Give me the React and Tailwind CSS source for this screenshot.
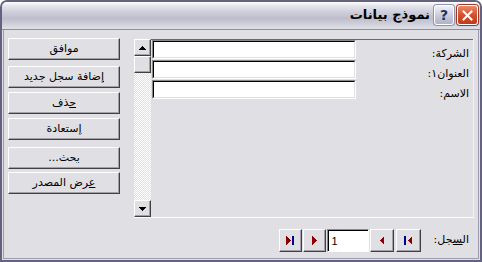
const raised = 'border border-t-white border-l-white border-r-[#404040] border-b-[#404040] bg-[#e0dfe3] shadow-[inset_-1px_-1px_0_#a2a1a8]';

function Btn({ className = '', children }) {
  return (
    <div className={`flex items-center justify-center ${raised} ${className}`}>
      {children}
    </div>
  );
}

function Field() {
  return (
    <div className="h-[19px] border-t border-l border-t-[#8a8a8a] border-l-[#8a8a8a] border-b border-r border-b-white border-r-white">
      <div className="h-full border-t border-l border-t-black border-l-black border-b border-r border-b-[#e0dfe3] border-r-[#e0dfe3] bg-white" />
    </div>
  );
}

function NavIcon({ kind }) {
  const red = '#8b0000';
  const navy = '#00008b';
  return (
    <svg width="10" height="9" viewBox="0 0 10 9" shapeRendering="crispEdges">
      {kind === 'first' && (<><rect x="1" y="0" width="2" height="9" fill={navy} /><polygon points="9,0 4.5,4.5 9,9" fill={red} /></>)}
      {kind === 'prev' && <polygon points="7,0 2.5,4.5 7,9" fill={red} />}
      {kind === 'next' && <polygon points="3,0 7.5,4.5 3,9" fill={red} />}
      {kind === 'last' && (<><polygon points="1,0 5.5,4.5 1,9" fill={red} /><rect x="7" y="0" width="2" height="9" fill={navy} /></>)}
    </svg>
  );
}

export default function App() {
  return (
    <div className="h-[262px] w-[482px] overflow-hidden bg-white">
      <div className="flex h-full flex-col rounded-t-[7px] border-2 border-[#64637f] bg-[#e0dfe3] font-['DejaVu_Sans',sans-serif] text-[11px] text-black">
        {/* title bar */}
        <div className="flex h-[28px] shrink-0 items-start justify-end rounded-t-[5px] border-b border-[#8d8ca3] bg-[linear-gradient(to_bottom,#fdfdfe,#e4e4ec_15%,#c8c8d6_45%,#bdbdcd_62%,#d6d6e0_88%,#e0e0e8)] pr-[2px] pt-[3px]">
          <span dir="rtl" className="mr-[4px] mt-[1px] text-[13px] font-bold leading-[18px]">نموذج بيانات</span>
          <div className="flex h-[20px] w-[20px] items-center justify-center rounded-[3px] border border-white bg-[linear-gradient(to_bottom,#eef0f8,#c4c8da_60%,#aeb3c9)] shadow-[0_0_0_1px_#8f93ab] text-[14px] font-bold leading-none text-[#2c2f55]">?</div>
          <div className="ml-[3px] flex h-[20px] w-[21px] items-center justify-center rounded-[3px] border border-white bg-[linear-gradient(to_bottom,#eb8a6c,#d4502f_50%,#c23a1b)] shadow-[0_0_0_1px_#9c3a28]">
            <svg width="11" height="11" viewBox="0 0 11 11">
              <path d="M1.5 1.5 L9.5 9.5 M9.5 1.5 L1.5 9.5" stroke="#fff" strokeWidth="2" strokeLinecap="square" />
            </svg>
          </div>
        </div>

        {/* client */}
        <div className="mx-[1px] mb-[1px] flex flex-1 flex-col border-x border-b border-[#9c9bb0]">
          <div className="flex pl-[4px] pt-[8px]">
            {/* command buttons */}
            <div dir="rtl" className="flex w-[112px] flex-col">
              <Btn className="h-[22px]">موافق</Btn>
              <Btn className="mt-[6px] h-[22px]"><span><span className="underline">إ</span>ضافة سجل جديد</span></Btn>
              <Btn className="mt-[4px] h-[22px]"><span><span className="underline">ح</span>ذف</span></Btn>
              <Btn className="mt-[4px] h-[22px]"><span><span className="underline">إ</span>ستعادة</span></Btn>
              <Btn className="mt-[7px] h-[22px]"><span><span className="underline">ب</span>حث...</span></Btn>
              <Btn className="mt-[3px] h-[22px]"><span><span className="underline">ع</span>رض المصدر</span></Btn>
            </div>

            {/* form panel */}
            <div className="ml-[14px] mt-[1px] flex h-[179px] w-[340px] border-b border-r border-b-white border-r-[#f4f4f6]">
              <div className="flex w-[17px] flex-col">
                <Btn className="h-[17px]">
                  <svg width="7" height="4" viewBox="0 0 7 4" shapeRendering="crispEdges"><polygon points="3.5,0 7,4 0,4" fill="#000" /></svg>
                </Btn>
                <Btn className="h-[17px]" />
                <div className="flex-1 bg-[image:repeating-conic-gradient(#ffffff_0_25%,#e0dfe3_0_50%)] bg-[length:2px_2px]" />
                <Btn className="h-[17px]">
                  <svg width="7" height="4" viewBox="0 0 7 4" shapeRendering="crispEdges"><polygon points="0,0 7,0 3.5,4" fill="#000" /></svg>
                </Btn>
              </div>
              <div className="flex flex-1 border-t border-t-[#6a6a6a]">
                <div className="ml-[1px] flex w-[204px] flex-col gap-[1px]">
                  <Field />
                  <Field />
                  <Field />
                </div>
                <div dir="rtl" className="flex flex-1 flex-col pr-[4px] pt-[6px]">
                  <div className="h-[20px]">الشركة:</div>
                  <div className="h-[20px]">العنوان١:</div>
                  <div className="h-[20px]">الاسم:</div>
                </div>
              </div>
            </div>
          </div>

          {/* record navigation */}
          <div className="mt-[11px] flex h-[23px] items-center justify-end pr-[9px]">
            <Btn className="h-[23px] w-[23px]"><NavIcon kind="last" /></Btn>
            <Btn className="ml-[1px] h-[23px] w-[23px]"><NavIcon kind="next" /></Btn>
            <div className="ml-[1px] h-[23px] w-[42px] border-t border-l border-t-[#8a8a8a] border-l-[#8a8a8a] border-b border-r border-b-white border-r-white">
              <div className="flex h-full items-center border-t border-l border-t-black border-l-black bg-white pl-[3px] font-['Liberation_Sans',sans-serif] text-[11px]">1</div>
            </div>
            <Btn className="ml-[1px] h-[23px] w-[24px]"><NavIcon kind="prev" /></Btn>
            <Btn className="ml-[2px] h-[23px] w-[25px]"><NavIcon kind="first" /></Btn>
            <span dir="rtl" className="ml-[13px]">ال<span className="underline">س</span>جل:</span>
          </div>
        </div>
      </div>
    </div>
  );
}
